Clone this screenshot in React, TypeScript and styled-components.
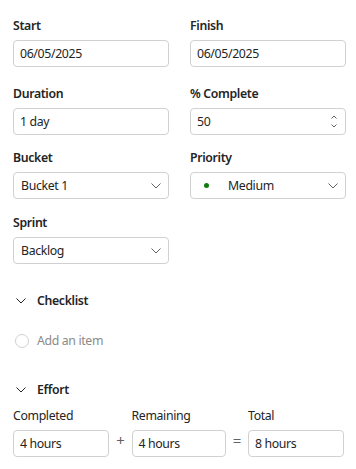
import React from "react";
import styled, { createGlobalStyle } from "styled-components";

const Global = createGlobalStyle`
  html, body { margin: 0; padding: 0; background: #ffffff; }
  body { font-family: "Noto Sans", "Open Sans", "Liberation Sans", sans-serif; color: #242424; }
  * { box-sizing: border-box; }
`;

const Page = styled.div`
  width: 356px;
  padding: 15px 12px 0 13px;
  letter-spacing: -0.35px;
`;

const FieldGrid = styled.div<{ $top?: number; $rowGap: number }>`
  display: grid;
  grid-template-columns: 156px 156px;
  column-gap: 21px;
  row-gap: ${(p) => p.$rowGap}px;
  margin-top: ${(p) => p.$top ?? 0}px;
`;

const Field = styled.div`
  display: flex;
  flex-direction: column;
  gap: 4px;
`;

const Label = styled.label<{ $regular?: boolean }>`
  font-size: 12.3px;
  line-height: 20px;
  padding-top: 1px;
  font-weight: ${(p) => (p.$regular ? 400 : 600)};
  color: #242424;
`;

const Box = styled.div<{ $width?: number }>`
  height: 27px;
  width: ${(p) => (p.$width ? `${p.$width}px` : "100%")};
  border: 1px solid #d1d1d1;
  border-radius: 4px;
  display: flex;
  align-items: center;
  padding: 0 7px 0 6px;
  font-size: 12.3px;
  color: #242424;
  background: #fff;
`;

const SelectBox = styled(Box)`
  padding: 0 7px 0 7px;
  justify-content: space-between;
`;

const Value = styled.span`
  flex: 1;
  white-space: nowrap;
`;

const Spinner = styled.div`
  display: flex;
  flex-direction: column;
  gap: 5px;
  margin-right: 1px;
`;

const Dot = styled.span`
  width: 5px;
  height: 5px;
  border-radius: 50%;
  background: #107c10;
  margin: 0 19px 0 6px;
`;

const SectionHeader = styled.div<{ $top: number }>`
  display: flex;
  align-items: center;
  gap: 11px;
  margin-top: ${(p) => p.$top}px;
  padding-left: 3px;
  font-size: 12.3px;
  line-height: 20px;
  font-weight: 600;
  color: #242424;
`;

const AddItem = styled.div`
  display: flex;
  align-items: center;
  gap: 8px;
  margin-top: 20px;
  padding-left: 2px;
  font-size: 12.3px;
  line-height: 20px;
  color: #8a8a8a;
`;

const Circle = styled.span`
  width: 14px;
  height: 14px;
  border-radius: 50%;
  border: 1px solid #d1d1d1;
`;

const EffortRow = styled.div`
  display: flex;
  align-items: flex-end;
  margin-top: 5px;
`;

const Operator = styled.span<{ $w: number }>`
  width: ${(p) => p.$w}px;
  height: 27px;
  display: flex;
  align-items: center;
  justify-content: center;
  font-size: 15px;
  color: #616161;
  padding-bottom: 7px;
`;

const Chevron = ({ color = "#616161", w = 10, h = 5 }: { color?: string; w?: number; h?: number }) => (
  <svg width={w} height={h + 1} viewBox={`0 0 ${w} ${h + 1}`} fill="none">
    <path d={`M0.5 0.5 L${w / 2} ${h} L${w - 0.5} 0.5`} stroke={color} strokeWidth="1" />
  </svg>
);

const Caret = ({ up }: { up?: boolean }) => (
  <svg width="6" height="4" viewBox="0 0 6 4" fill="none">
    <path d={up ? "M0.5 3.5 L3 1 L5.5 3.5" : "M0.5 0.5 L3 3 L5.5 0.5"} stroke="#616161" strokeWidth="1" />
  </svg>
);

export default function App() {
  return (
    <>
      <Global />
      <Page>
        <FieldGrid $rowGap={16}>
          <Field>
            <Label>Start</Label>
            <Box><Value>06/05/2025</Value></Box>
          </Field>
          <Field>
            <Label>Finish</Label>
            <Box><Value>06/05/2025</Value></Box>
          </Field>
          <Field>
            <Label>Duration</Label>
            <Box><Value>1 day</Value></Box>
          </Field>
          <Field>
            <Label>% Complete</Label>
            <Box>
              <Value>50</Value>
              <Spinner>
                <Caret up />
                <Caret />
              </Spinner>
            </Box>
          </Field>
        </FieldGrid>
        <FieldGrid $rowGap={13} $top={12}>
          <Field>
            <Label>Bucket</Label>
            <SelectBox><Value>Bucket 1</Value><Chevron /></SelectBox>
          </Field>
          <Field>
            <Label>Priority</Label>
            <SelectBox><Dot /><Value>Medium</Value><Chevron /></SelectBox>
          </Field>
          <Field>
            <Label>Sprint</Label>
            <SelectBox><Value>Backlog</Value><Chevron /></SelectBox>
          </Field>
        </FieldGrid>

        <SectionHeader $top={27}>
          <Chevron color="#242424" />
          Checklist
        </SectionHeader>
        <AddItem>
          <Circle />
          Add an item
        </AddItem>

        <SectionHeader $top={29}>
          <Chevron color="#242424" />
          Effort
        </SectionHeader>
        <EffortRow>
          <Field>
            <Label $regular>Completed</Label>
            <Box $width={96}><Value>4 hours</Value></Box>
          </Field>
          <Operator $w={23}>+</Operator>
          <Field>
            <Label $regular>Remaining</Label>
            <Box $width={94}><Value>4 hours</Value></Box>
          </Field>
          <Operator $w={23}>=</Operator>
          <Field>
            <Label $regular>Total</Label>
            <Box $width={96}><Value>8 hours</Value></Box>
          </Field>
        </EffortRow>
      </Page>
    </>
  );
}
